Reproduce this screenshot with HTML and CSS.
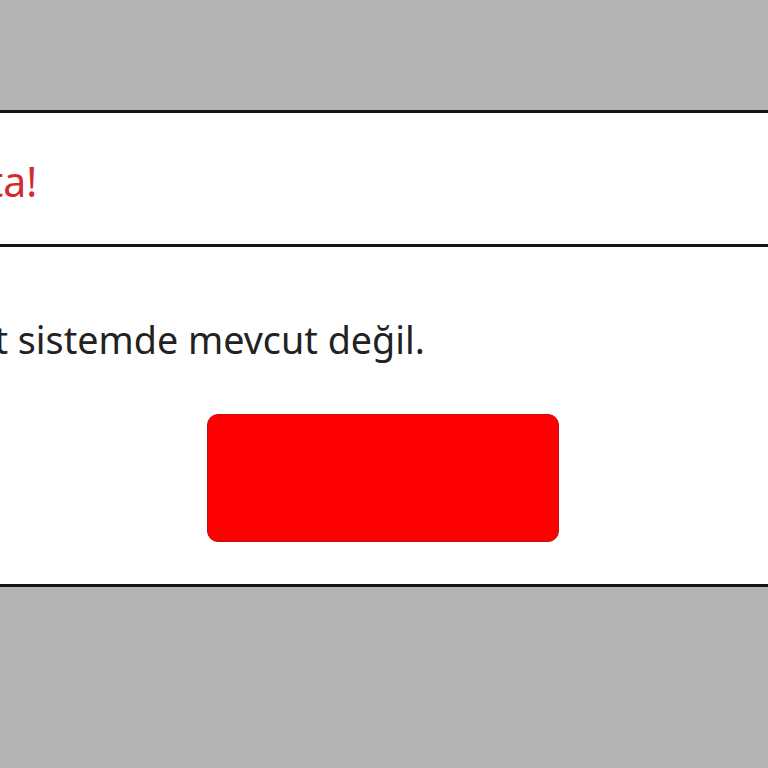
FILE: index.html
```html
<!DOCTYPE html>
<html lang="tr">
<head>
<meta charset="utf-8">
<link rel="stylesheet" href="styles.css">
</head>
<body>
<div class="modal">
  <div class="modal-header">
    <h4 class="modal-title">Hata!</h4>
  </div>
  <div class="modal-body">
    <p class="message">Kayıt sistemde mevcut değil.</p>
    <div class="actions">
      <button class="btn-close" type="button"></button>
    </div>
  </div>
</div>
</body>
</html>
```

FILE: styles.css
```css
html, body {
  margin: 0;
  padding: 0;
  background: #b3b3b3;
  overflow: hidden;
  height: 768px;
}

.modal {
  margin: 110px 0 0 -81px;
  width: calc(100% + 160px);
  background: #fff;
  border-top: 3px solid #151515;
  border-bottom: 3px solid #151515;
  font-family: "Noto Sans", "Open Sans", sans-serif;
}

.modal-header {
  height: 134px;
  box-sizing: border-box;
  display: flex;
  align-items: center;
  border-bottom: 3px solid #151515;
  padding: 4px 0 0 16px;
}

.modal-title {
  margin: 0;
  font-size: 41px;
  font-weight: normal;
  color: #d42a2f;
  line-height: 48px;
}

.modal-body {
  height: 337px;
  padding-top: 69px;
  box-sizing: border-box;
}

.message {
  margin: 0;
  padding-left: 2px;
  font-size: 37.7px;
  line-height: 48px;
  color: #222;
}

.actions {
  display: flex;
  justify-content: center;
  margin-top: 50px;
}

.btn-close {
  width: 352px;
  height: 128px;
  background: #ff0000;
  border: 1px solid #c41010;
  border-radius: 11px;
  padding: 0;
}
```
